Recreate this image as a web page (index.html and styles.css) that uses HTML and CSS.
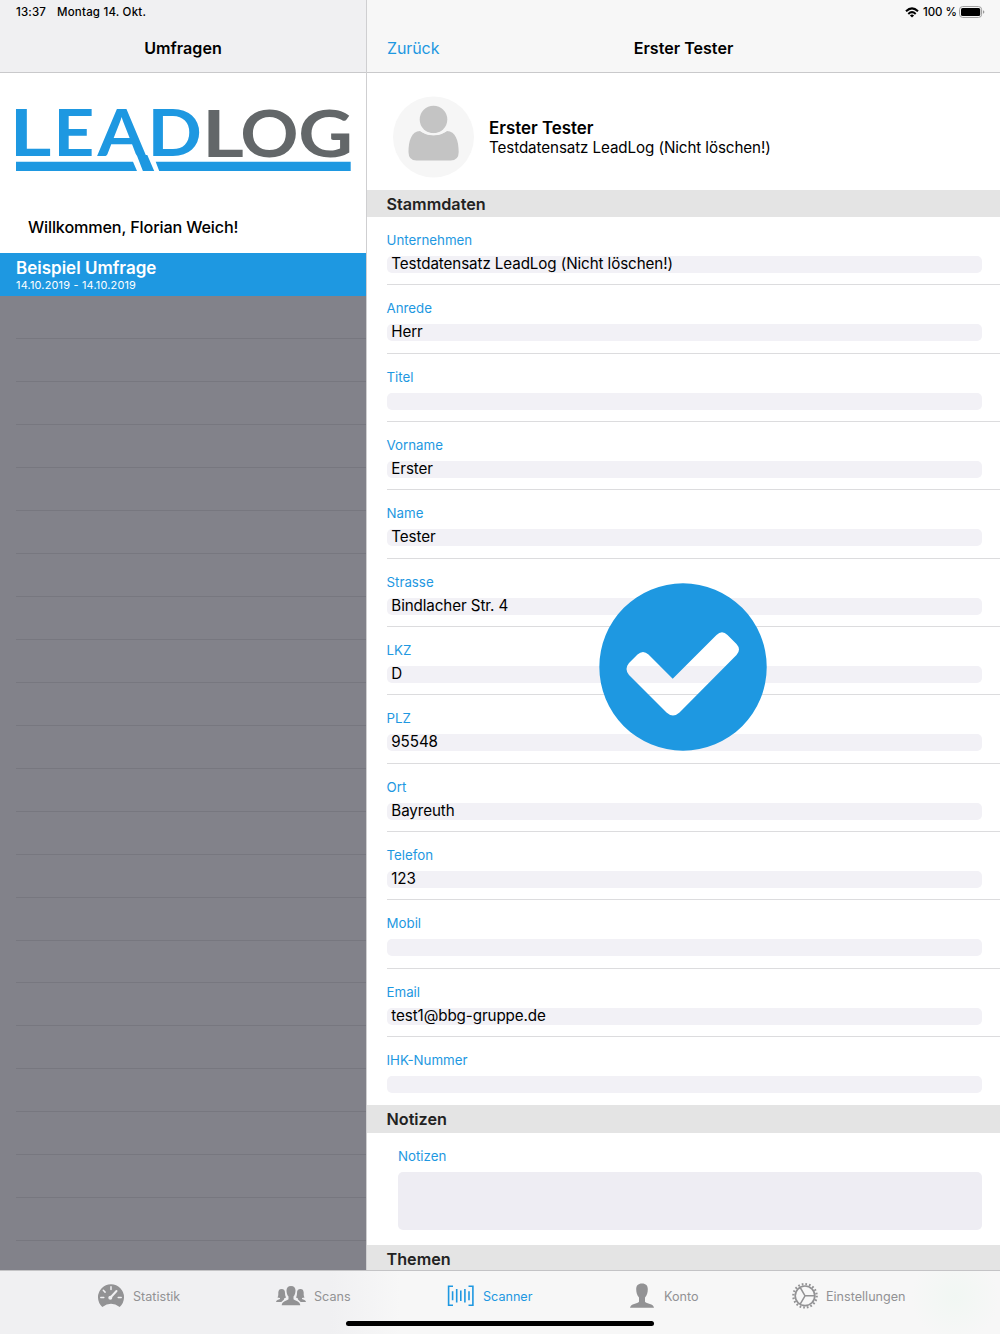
FILE: index.html
```html
<!DOCTYPE html>
<html lang="de">
  <head>
    <meta charset="UTF-8" />
    <meta name="viewport" content="width=device-width, initial-scale=1.0" />
    <title>LeadLog - Scanner</title>
    <link rel="stylesheet" href="styles.css">
  </head>
  <body>
    <div class="app">
      <div class="panes">
        <!-- Sidebar -->
        <aside class="sidebar">
          <header class="bar">
            <div class="status"><span class="time">13:37</span><span class="date">Montag 14. Okt.</span></div>
            <h1 class="bar-title">Umfragen</h1>
          </header>

          <div class="brand">
            <svg class="logo" width="336" height="66" viewBox="0 0 336 66">
              <g class="logo-text">
                <text class="lead" transform="translate(-5.500 48.600) scale(1.240 1)">L</text>
                <text class="lead" transform="translate(38.300 48.600) scale(1.100 1)">E</text>
                <text class="lead" transform="translate(82.500 48.600) scale(1.070 1)">A</text>
                <text class="lead" transform="translate(132.500 48.600) scale(1.100 1)">D</text>
                <text class="log" transform="translate(187 49.500) scale(1.240 1)">L</text>
                <text class="log" transform="translate(225.200 49.500) scale(1.110 1)">O</text>
                <text class="log" transform="translate(283.200 49.500) scale(1.160 1)">G</text>
              </g>
              <path class="lead" d="M1 54.800h117l4 9.200H1zM140.700 54.800h195v9.200H144.200zM121.700 48h10.600l6.900 16h-11.300z" />
            </svg>
            <p class="welcome">Willkommen, Florian Weich!</p>
          </div>

          <ul class="surveys">
            <li class="active">
              <strong>Beispiel Umfrage</strong>
              <small>14.10.2019 - 14.10.2019</small>
            </li>
            <li></li><li></li><li></li><li></li><li></li><li></li>
            <li></li><li></li><li></li><li></li><li></li><li></li>
            <li></li><li></li><li></li><li></li><li></li><li></li>
            <li></li><li></li><li></li><li></li><li></li>
          </ul>
        </aside>

        <!-- Contact -->
        <main class="detail">
          <header class="bar">
            <div class="status status-right">
              <svg class="wifi" width="14" height="11" viewBox="0 0 14 11">
                <g fill="none" stroke="#000" stroke-width="2">
                  <path d="M1 4.300Q7-1.500 13 4.300" />
                  <path d="M3.300 6.900Q7 3.400 10.700 6.900" />
                </g>
                <path d="M4.900 8.400Q7 6.700 9.100 8.400L7 10.600z" />
              </svg>
              <span class="percent">100 %</span>
              <svg class="battery" width="26" height="12" viewBox="0 0 26 12">
                <rect x=".6" y=".6" width="22" height="10.800" rx="3" fill="#fff" stroke="#999" />
                <rect x="2" y="2" width="19.200" height="8" rx="1.600" />
                <path d="M24 4.200q1.400.5 1.400 1.800t-1.400 1.800z" fill="#999" />
              </svg>
            </div>
            <a href="#" class="back">Zurück</a>
            <h1 class="bar-title">Erster Tester</h1>
          </header>

          <section class="person">
            <svg class="avatar" width="82" height="82" viewBox="0 0 82 82">
              <circle cx="40.500" cy="41" r="40.500" fill="#f6f6f6" />
              <circle cx="40.500" cy="23.500" r="13.800" fill="#c4c4c4" />
              <path fill="#c4c4c4" d="M27 35Q40.500 43.500 54 35C62.500 35 65.700 45 65.700 56Q65.700 64.500 57.500 64.500H23.500Q15.500 64.500 15.500 56C15.500 45 18.500 35 27 35z" />
              <path fill="none" stroke="#f6f6f6" stroke-width="2" d="M25.500 32Q31.500 38.300 40.500 38.300T55.500 32" />
            </svg>
            <div class="person-text">
              <h2>Erster Tester</h2>
              <p>Testdatensatz LeadLog (Nicht löschen!)</p>
            </div>
          </section>

          <h3 class="section">Stammdaten</h3>
          <div class="fields">
            <div class="field"><label>Unternehmen</label><div class="value">Testdatensatz LeadLog (Nicht löschen!)</div></div>
            <div class="field"><label>Anrede</label><div class="value">Herr</div></div>
            <div class="field"><label>Titel</label><div class="value"></div></div>
            <div class="field"><label>Vorname</label><div class="value">Erster</div></div>
            <div class="field"><label>Name</label><div class="value">Tester</div></div>
            <div class="field"><label>Strasse</label><div class="value">Bindlacher Str. 4</div></div>
            <div class="field"><label>LKZ</label><div class="value">D</div></div>
            <div class="field"><label>PLZ</label><div class="value">95548</div></div>
            <div class="field"><label>Ort</label><div class="value">Bayreuth</div></div>
            <div class="field"><label>Telefon</label><div class="value">123</div></div>
            <div class="field"><label>Mobil</label><div class="value"></div></div>
            <div class="field"><label>Email</label><div class="value">test1@bbg-gruppe.de</div></div>
            <div class="field"><label>IHK-Nummer</label><div class="value"></div></div>
          </div>

          <h3 class="section">Notizen</h3>
          <div class="notes">
            <label>Notizen</label>
            <div class="notes-box"></div>
          </div>

          <h3 class="section">Themen</h3>
        </main>
      </div>

      <!-- Tab bar -->
      <nav class="tabs">
        <a href="#" class="tab">
          <svg width="26" height="24" viewBox="0 0 26 24">
            <path fill="currentColor" d="M4.300 23A13 13 0 1 1 21.700 23Q13 16.500 4.300 23z" />
            <g stroke="#f0f0f2" stroke-width="1.500" stroke-linecap="round">
              <path d="M13 2.800v2.700M5.300 6.300l1.800 1.800M2.800 13.500h3M20.200 13.500h3" />
              <path stroke-width="2" d="M12.500 13.500L18.500 7" />
            </g>
            <circle cx="12.300" cy="13.700" r="2" fill="#f0f0f2" />
          </svg>
          <span>Statistik</span>
        </a>
        <a href="#" class="tab">
          <svg width="30" height="22" viewBox="0 0 30 22">
            <g fill="currentColor">
              <path d="M15 1c3 0 4.500 1.800 4.500 4.500 0 2.500-.8 4.800-2 6v2.700c1.500 1.600 6.500 2 6.800 6H5.700c.3-4 5.300-4.400 6.800-6v-2.700c-1.200-1.200-2-3.500-2-6C10.500 2.800 12 1 15 1z" />
              <path d="M5.500 4C8 4 9 5.500 9 8c0 1.500.2 3 1 4.500L8 13.500v1L5.300 17H0c.2-2 2.500-2.500 4-3v-1L1.500 12.500C2.500 11 2.300 9 2.300 7.500 2.500 5 3.500 4 5.500 4z" />
              <path d="M24.500 4C22 4 21 5.500 21 8c0 1.500-.2 3-1 4.500l2 1v1l2.700 2.500H30c-.2-2-2.500-2.500-4-3v-1l2.500-.5c-1-1.500-.8-3.500-.8-5C27.500 5 26.500 4 24.500 4z" />
            </g>
          </svg>
          <span>Scans</span>
        </a>
        <a href="#" class="tab current">
          <svg width="28" height="22" viewBox="0 0 28 22">
            <g fill="none" stroke="currentColor" stroke-width="1.600">
              <path d="M6 1.300H1.600v19H6M21.500 1.300h4.400v19h-4.400" />
              <path d="M5.600 6.300v9M9.700 4v13.500M13.800 5.500v10.500M17.900 4v13.500M22 6.300v9" />
            </g>
          </svg>
          <span>Scanner</span>
        </a>
        <a href="#" class="tab">
          <svg width="24" height="26" viewBox="0 0 24 26">
            <path fill="currentColor" d="M12 .5c4 0 5.800 2.200 5.800 5.600 0 3.500-.8 6.400-2.800 8.400v4.300c1.500 2 8.500 1.900 9 6H0c.5-4.100 7.500-4 9-6v-4.300c-2-2-2.800-4.900-2.800-8.400C6.200 2.700 8 .5 12 .5z" />
          </svg>
          <span>Konto</span>
        </a>
        <a href="#" class="tab">
          <svg width="26" height="26" viewBox="0 0 26 26">
            <g fill="none" stroke="currentColor">
              <circle cx="13" cy="12.800" r="9.800" stroke-width="1.700" />
              <circle cx="13" cy="12.800" r="11.700" stroke-width="2.200" stroke-dasharray="1.700 1.976" />
              <path stroke-width="1.500" d="M22.500 12.800H13L8.200 4.500M13 12.800L8.200 21.100" />
            </g>
          </svg>
          <span>Einstellungen</span>
        </a>
        <div class="home-indicator"></div>
      </nav>

      <!-- Saved overlay -->
      <svg class="saved" width="168" height="168" viewBox="0 0 168 168">
        <path fill="#1e98e1" fill-rule="evenodd" d="M84 .3a83.700 83.700 0 1 1 0 167.400A83.700 83.700 0 0 1 84 .3z
          M30 80L38.500 71.500Q44 66.500 49.500 71.500L73.700 95.700L117.500 52Q123 46.500 128.500 52L137.500 61Q142.500 66.500 137.500 72L80.500 129.500Q74 135.500 67.500 129.500L30 92Q25 86 30 80z" />
      </svg>
    </div>
  </body>
</html>
```

FILE: styles.css
```css
* {
  margin: 0;
  padding: 0;
  box-sizing: border-box;
}

body {
  font-family: Inter, "Liberation Sans", sans-serif;
  background: #fff;
  color: #000;
}

a {
  color: inherit;
  text-decoration: none;
}

.app {
  position: relative;
  width: 1000px;
  height: 1334px;
  overflow: hidden;
  display: flex;
  flex-direction: column;
}

.panes {
  display: flex;
  height: 1270px;
  overflow: hidden;
}

.sidebar {
  width: 366px;
  background: #82828a;
}

.detail {
  flex: 1;
  border-left: 1px solid #cfcfd1;
  background: #fff;
}

/* Top bars */
.bar {
  position: relative;
  height: 73px;
  background: #f0f0f2;
  border-bottom: 1px solid #c9c9cb;
}

.detail .bar {
  background: #f7f7f7;
}

.status {
  height: 24px;
  padding-left: 16px;
  display: flex;
  align-items: center;
  font-size: 11.5px;
  font-weight: 500;
}

.time {
  width: 41px;
  letter-spacing: 0.15px;
}

.date {
  letter-spacing: 0.2px;
}

.status-right {
  justify-content: flex-end;
  padding: 0 15px 0 0;
}

.percent {
  margin: 0 2px 0 4px;
}

.bar-title {
  height: 48px;
  line-height: 48px;
  text-align: center;
  font-size: 16.1px;
  font-weight: 600;
}

.back {
  position: absolute;
  left: 20px;
  top: 24px;
  line-height: 48px;
  font-size: 16px;
  letter-spacing: -0.1px;
  color: #1e98e1;
}

/* Brand */
.brand {
  height: 180px;
  padding: 34px 15px 0;
  background: #fff;
}

.logo {
  display: block;
  overflow: visible;
}

.logo-text {
  font-family: Lato, sans-serif;
  font-size: 65px;
  font-weight: 700;
}

.lead {
  fill: #1e98e1;
}

.log {
  fill: #636769;
}

.welcome {
  margin: 43px 0 0 13px;
  line-height: 22px;
  font-size: 16.2px;
  font-weight: 500;
  letter-spacing: -0.15px;
}

/* Survey list */
.surveys {
  list-style: none;
}

.surveys li {
  height: 42.98px;
  margin-left: 16px;
  border-bottom: 1px solid #77777f;
}

.surveys .active {
  margin-left: 0;
  padding: 5px 16px 0;
  border: 0;
  background: #1e98e1;
  color: #fff;
}

.active strong,
.active small {
  display: block;
}

.active strong {
  line-height: 21px;
  font-size: 17px;
  font-weight: 600;
}

.active small {
  line-height: 13px;
  font-size: 10.9px;
  letter-spacing: 0.2px;
}

/* Person */
.person {
  height: 116.5px;
  padding: 23px 0 0 26px;
  display: flex;
}

.person-text {
  padding: 22px 0 0 14px;
}

.person h2 {
  line-height: 21px;
  font-size: 16.9px;
  font-weight: 600;
}

.person p {
  line-height: 18px;
  font-size: 15.2px;
  letter-spacing: -0.1px;
}

.section {
  height: 27.4px;
  padding-left: 19.5px;
  line-height: 28px;
  background: #e4e4e4;
  color: #222;
  font-size: 16.2px;
  font-weight: 600;
}

/* Fields */
.fields {
  padding-left: 19.5px;
}

.field {
  height: 68.34px;
  padding: 14px 18px 0 0;
  border-bottom: 1px solid #dcdcde;
}

.field:last-child {
  border: 0;
}

label {
  display: block;
  line-height: 18px;
  font-size: 13.3px;
  color: #1e98e1;
}

.value {
  height: 17px;
  margin-top: 7px;
  padding-left: 4.8px;
  border-radius: 5px;
  background: #f2f1f6;
  line-height: 15px;
  font-size: 15.2px;
  letter-spacing: -0.1px;
}

.notes {
  height: 112.5px;
  padding: 14px 18px 0 31px;
}

.notes-box {
  height: 58px;
  margin-top: 7px;
  border-radius: 5px;
  background: #eeedf3;
}

/* Tab bar */
.tabs {
  position: relative;
  height: 64px;
  padding: 0 0 14px 98px;
  border-top: 1px solid #c4c4c6;
  display: grid;
  grid-template-columns: 178px 171px 183px 162px auto;
  align-items: center;
  background: radial-gradient(circle at 955px 26px, #f1f7f3 0, rgba(247, 247, 247, 0) 44px), linear-gradient(90deg, #f0f0f2 330px, #f7f7f7 400px);
  color: #929294;
  font-size: 12.6px;
}

.tab {
  display: flex;
  align-items: center;
  gap: 8px;
}

.tab:first-child {
  gap: 9px;
}

.tab:nth-child(4) {
  gap: 10px;
}

.tab span {
  padding-top: 1px;
}

.current {
  color: #1e98e1;
}

.home-indicator {
  position: absolute;
  left: 346px;
  top: 50px;
  width: 308px;
  height: 5px;
  border-radius: 3px;
  background: #000;
}

.saved {
  position: absolute;
  left: 599px;
  top: 583px;
}
```
